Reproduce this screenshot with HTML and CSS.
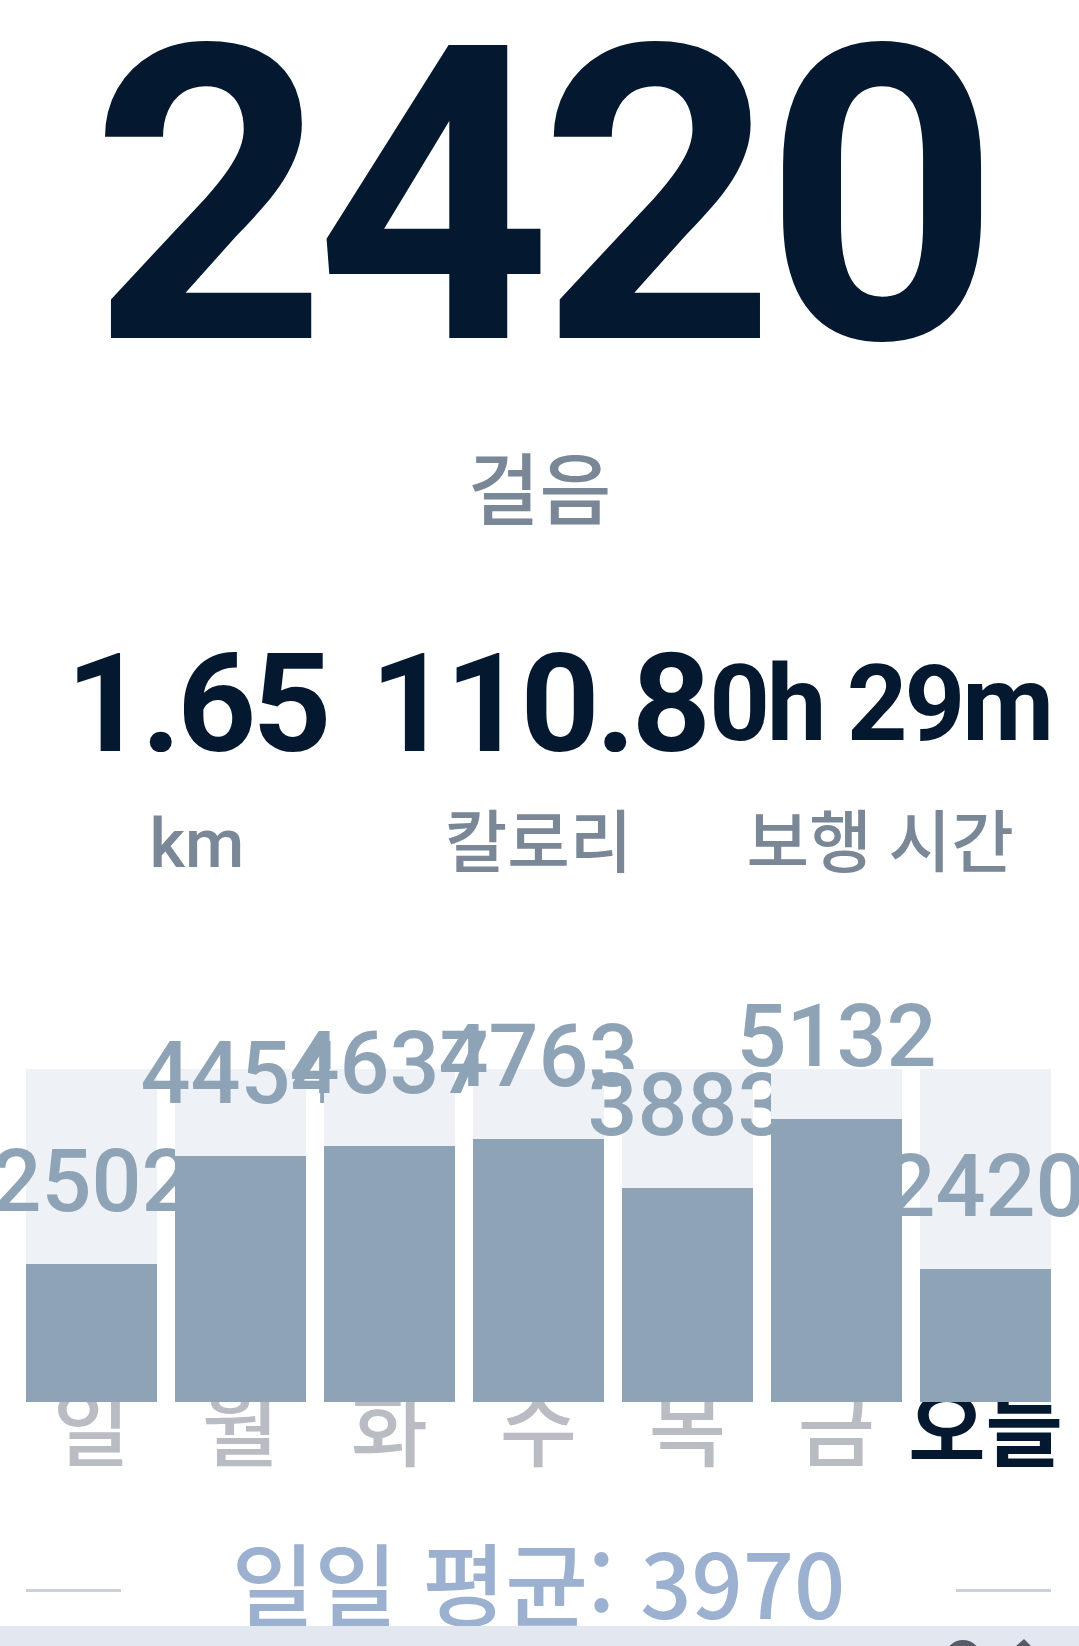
FILE: index.html
```html
<!DOCTYPE html>
<html lang="ko">
<head>
<meta charset="utf-8">
<title>걸음</title>
<link rel="stylesheet" href="styles.css">
</head>
<body>
<main class="page">
  <div class="hero">2420</div>
  <div class="hero-label">걸음</div>

  <div class="stats">
    <div class="stat-num">1.65</div>
    <div class="stat-num">110.8</div>
    <div class="stat-num stat-num--small">0h 29m</div>
  </div>
  <div class="stat-labels">
    <div class="stat-label">km</div>
    <div class="stat-label">칼로리</div>
    <div class="stat-label">보행 시간</div>
  </div>

  <div class="chart">
    <div class="col" style="--h:41.44%"><div class="bar"></div><span class="val">2502</span></div>
    <div class="col" style="--h:73.77%"><div class="bar"></div><span class="val">4454</span></div>
    <div class="col" style="--h:76.80%"><div class="bar"></div><span class="val">4637</span></div>
    <div class="col" style="--h:78.89%"><div class="bar"></div><span class="val">4763</span></div>
    <div class="col" style="--h:64.31%"><div class="bar"></div><span class="val">3883</span></div>
    <div class="col" style="--h:85.00%"><div class="bar"></div><span class="val">5132</span></div>
    <div class="col" style="--h:40.08%"><div class="bar"></div><span class="val">2420</span></div>
  </div>
  <div class="days">
    <div class="day">일</div>
    <div class="day">월</div>
    <div class="day">화</div>
    <div class="day">수</div>
    <div class="day">목</div>
    <div class="day">금</div>
    <div class="day day--today">오늘</div>
  </div>

  <div class="avg">
    <span class="avg-line"></span>
    <span class="avg-text">일일 평균: 3970</span>
    <span class="avg-line"></span>
  </div>
</main>
<nav class="bottom-nav">
  <svg class="bottom-nav-icons" width="1079" height="20" viewBox="0 0 1079 20" aria-hidden="true">
    <circle cx="963" cy="32" r="18" fill="#565c67"/>
    <path d="M1016 20 L1024 13 L1031 20 Z" fill="#565c67"/>
  </svg>
</nav>
</body>
</html>
```
FILE: styles.css
```css
html, body {
  margin: 0;
  padding: 0;
  background: #ffffff;
}

body {
  width: 1079px;
  height: 1646px;
  overflow: hidden;
  font-family: Roboto, "Noto Sans CJK KR", sans-serif;
}

.page {
  display: flex;
  flex-direction: column;
}

.hero {
  font: 700 412px/395px Roboto, sans-serif;
  letter-spacing: -12px;
  color: #04182f;
  text-align: center;
  height: 395px;
}

.hero-label {
  margin-top: 40px;
  font: 500 78px/100px "Noto Sans CJK KR", sans-serif;
  color: #798797;
  text-align: center;
}

.stats {
  margin-top: 99px;
  display: grid;
  grid-template-columns: repeat(3, minmax(0, 1fr));
  align-items: center;
  height: 140px;
  padding: 0 28px 0 26px;
}

.stat-num {
  display: flex;
  justify-content: center;
  white-space: nowrap;
  font: 700 138px/140px Roboto, sans-serif;
  letter-spacing: -4px;
  color: #04182f;
}

.stat-num--small {
  font-size: 106px;
  letter-spacing: -3px;
}

.stat-labels {
  margin-top: 30px;
  display: grid;
  grid-template-columns: repeat(3, minmax(0, 1fr));
  padding: 0 28px 0 26px;
}

.stat-label {
  display: flex;
  justify-content: center;
  white-space: nowrap;
  font: 500 68px/80px Roboto, "Noto Sans CJK KR", sans-serif;
  color: #798797;
}

.chart {
  margin-top: 185px;
  display: grid;
  grid-template-columns: repeat(7, minmax(0, 1fr));
  gap: 18px;
  height: 333px;
  padding: 0 28px 0 26px;
}

.col {
  position: relative;
  background: #eef1f5;
}

.bar {
  position: absolute;
  left: 0;
  right: 0;
  bottom: 0;
  height: var(--h);
  background: #8fa3b6;
}

.val {
  position: absolute;
  left: 50%;
  bottom: calc(var(--h) + 39px);
  transform: translateX(-50%);
  white-space: nowrap;
  font: 500 88px/88px Roboto, sans-serif;
  color: #8fa3b6;
}

.days {
  margin-top: -28px;
  display: grid;
  grid-template-columns: repeat(7, minmax(0, 1fr));
  gap: 18px;
  padding: 0 28px 0 26px;
}

.day {
  display: flex;
  justify-content: center;
  white-space: nowrap;
  font: 500 84px/100px "Noto Sans CJK KR", sans-serif;
  color: #b9bcc2;
}

.day--today {
  font-weight: 700;
  color: #04182f;
}

.avg {
  margin-top: 56px;
  display: flex;
  justify-content: space-between;
  align-items: center;
  padding: 0 28px 0 26px;
}

.avg-line {
  width: 95px;
  height: 3px;
  margin-top: 20px;
  background: #c9d1dc;
}

.avg-text {
  white-space: nowrap;
  font: 500 90px/100px "Noto Sans CJK KR", sans-serif;
  color: #9cb0d0;
}

.bottom-nav {
  position: fixed;
  left: 0;
  right: 0;
  bottom: 0;
  height: 20px;
  background: #e3e7ef;
  overflow: hidden;
}

.bottom-nav-icons {
  display: block;
}
```
